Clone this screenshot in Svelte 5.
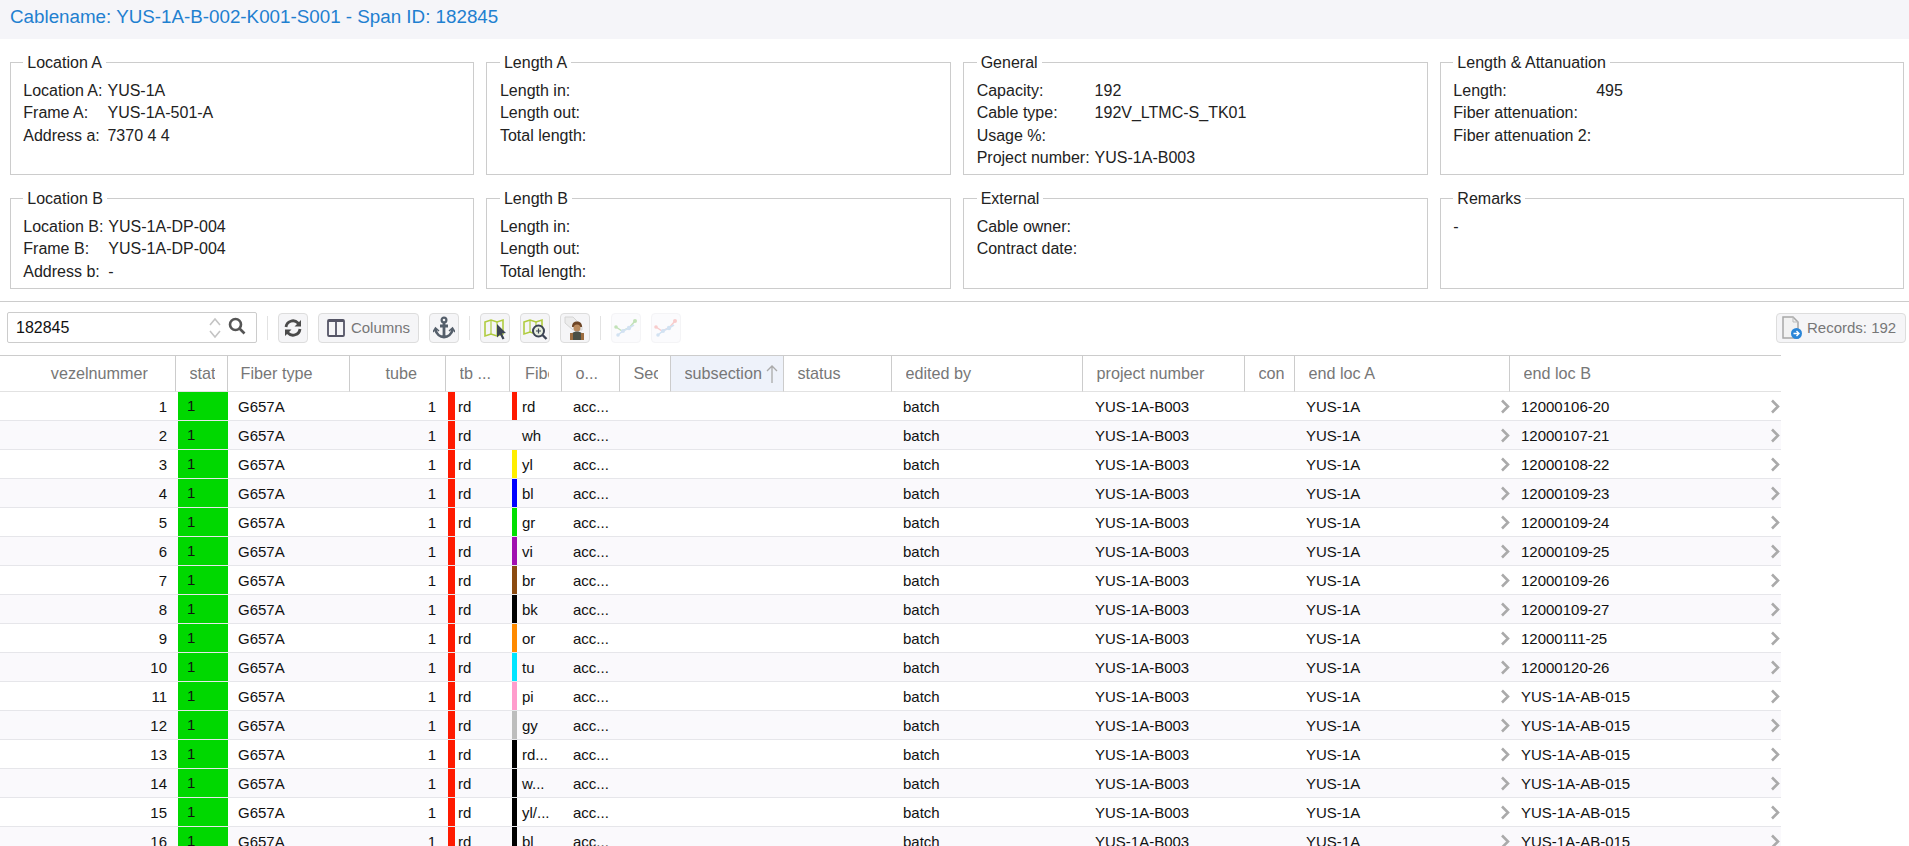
<script>
  const topBoxes = [
    { title: "Location A", rows: [["Location A:", "YUS-1A"], ["Frame A:", "YUS-1A-501-A"], ["Address a:", "7370 4 4"]] },
    { title: "Length A", rows: [["Length in:", ""], ["Length out:", ""], ["Total length:", ""]] },
    { title: "General", rows: [["Capacity:", "192"], ["Cable type:", "192V_LTMC-S_TK01"], ["Usage %:", ""], ["Project number:", "YUS-1A-B003"]] },
    { title: "Length & Attanuation", rows: [["Length:", "495"], ["Fiber attenuation:", ""], ["Fiber attenuation 2:", ""]] },
    { title: "Location B", rows: [["Location B:", "YUS-1A-DP-004"], ["Frame B:", "YUS-1A-DP-004"], ["Address b:", "-"]] },
    { title: "Length B", rows: [["Length in:", ""], ["Length out:", ""], ["Total length:", ""]] },
    { title: "External", rows: [["Cable owner:", ""], ["Contract date:", ""]] },
    { title: "Remarks", rows: [["-", ""]] }
  ];

  const columns = [
    { label: "vezelnummer", width: 176, cls: "right first" },
    { label: "status", width: 52 },
    { label: "Fiber type", width: 122, cls: "ftype" },
    { label: "tube", width: 96, cls: "right wide" },
    { label: "tb ...", width: 64 },
    { label: "Fiber color", width: 52, cls: "fc" },
    { label: "o...", width: 58 },
    { label: "Section", width: 51 },
    { label: "subsection", width: 113, cls: "sorted" },
    { label: "status", width: 108 },
    { label: "edited by", width: 191 },
    { label: "project number", width: 162 },
    { label: "contract", width: 50, cls: "con" },
    { label: "end loc A", width: 215 },
    { label: "end loc B", width: 271 }
  ];

  const fibers = [
    ["rd", "#ff1a00"], ["wh", "transparent"], ["yl", "#ffee00"], ["bl", "#0000ff"],
    ["gr", "#00e000"], ["vi", "#a010b0"], ["br", "#8b4a10"], ["bk", "#000"],
    ["or", "#ff8a00"], ["tu", "#00e5ff"], ["pi", "#ff9ccc"], ["gy", "#bdbdbd"],
    ["rd...", "#000"], ["w...", "#000"], ["yl/...", "#000"], ["bl", "#000"]
  ];

  const endB = ["12000106-20", "12000107-21", "12000108-22", "12000109-23", "12000109-24",
    "12000109-25", "12000109-26", "12000109-27", "12000111-25", "12000120-26"];

  const rows = fibers.map((f, i) => ({
    nr: i + 1,
    fiber: f[0],
    color: f[1],
    locB: endB[i] || "YUS-1A-AB-015"
  }));
</script>

<header class="title">Cablename: YUS-1A-B-002-K001-S001 - Span ID: 182845</header>

<section class="boxes">
  {#each topBoxes as box}
    <fieldset>
      <legend>{box.title}</legend>
      <div class="pairs">
        {#each box.rows as r}
          <span>{r[0]}</span><span>{r[1]}</span>
        {/each}
      </div>
    </fieldset>
  {/each}
</section>

<div class="toolbar">
  <div class="search">
    <span class="search-val">182845</span>
    <svg class="spin" width="14" height="24" viewBox="0 0 14 24" fill="none" stroke="#c4c4c4" stroke-width="1.6">
      <path d="M2 9l5-6 5 6M2 15l5 6 5-6" />
    </svg>
    <svg class="mag" width="18" height="18" viewBox="0 0 18 18" fill="none" stroke="#555" stroke-width="2.6">
      <circle cx="7.5" cy="7.5" r="5.5" />
      <path d="M11.5 11.5l5 5" />
    </svg>
  </div>
  <i class="sep"></i>
  <button aria-label="refresh">
    <svg width="20" height="20" viewBox="0 0 20 20" fill="none" stroke="#4a4a4a" stroke-width="2.8">
      <path d="M3 9a7 7 0 0 1 12-4l1.5 2" />
      <path d="M17 11a7 7 0 0 1-12 4l-1.5-2" />
      <path d="M18 2v6.5h-6.5M2 18v-6.5h6.500" fill="#4a4a4a" stroke="none" />
    </svg>
  </button>
  <button class="cols">
    <svg width="18" height="20" viewBox="0 0 18 20" fill="none" stroke="#556" stroke-width="1.8">
      <rect x="1" y="2" width="16" height="16" rx="1" />
      <path d="M9 2v16M1 3h16" />
    </svg>
    Columns
  </button>
  <button aria-label="anchor">
    <svg width="22" height="24" viewBox="0 0 22 24" fill="none" stroke="#555f6b" stroke-width="2.800">
      <circle cx="11" cy="4" r="2.400" stroke-width="2.200" />
      <path d="M11 7v14M7 10h8M2.500 14c1 4 4.500 7 8.500 7s7.500-3 8.500-7" />
      <path d="M0 16l2.500-4 3.500 3M22 16l-2.500-4-3.500 3" stroke-width="1.500" />
    </svg>
  </button>
  <i class="sep"></i>
  <button aria-label="map select">
    <svg width="24" height="24" viewBox="0 0 24 24" fill="none">
      <path d="M2 6l6-2 6 2 6-2v14l-6 2-6-2-6 2z" stroke="#b0cc40" stroke-width="1.600" />
      <path d="M8 4v14M14 6v14" stroke="#b0cc40" stroke-width="1.200" />
      <path d="M14 8l9 9-4 .5 2.500 5-2 1-2.500-5-3 3z" fill="#3c4454" />
    </svg>
  </button>
  <button aria-label="map zoom">
    <svg width="26" height="24" viewBox="0 0 26 24" fill="none">
      <path d="M2 6l6-2 6 2 6-2v12l-6 2-6-2-6 2z" stroke="#b0cc40" stroke-width="1.600" />
      <path d="M8 4v12M14 6v6" stroke="#b0cc40" stroke-width="1.200" />
      <circle cx="16.500" cy="15" r="5.500" stroke="#3c4454" stroke-width="2" fill="#e8efe0" />
      <path d="M20.500 19l4 4" stroke="#3c4454" stroke-width="2.400" />
      <path d="M14 15h5M16.500 12.500v5" stroke="#3c4454" stroke-width="1.200" />
    </svg>
  </button>
  <button aria-label="tag user">
    <svg width="24" height="26" viewBox="0 0 24 26" fill="none">
      <path d="M2 2h8l9 9v4H10L2 8z" fill="#ececec" stroke="#d4d4d4" />
      <path d="M9 12c0-4 2-5.500 5-5.500s5 1.500 5 5.500z" fill="#6d4526" />
      <circle cx="14" cy="13" r="3.500" fill="#b98a5e" />
      <path d="M7 25c0-6 3-8.500 7-8.500s7 2.500 7 8.500z" fill="#4a4f45" />
      <path d="M7 18h3v7H7zM18 18h3v7h-3z" fill="#9c6d40" />
    </svg>
  </button>
  <i class="sep"></i>
  <button class="off" aria-label="chart green">
    <svg width="24" height="20" viewBox="0 0 24 20" fill="none" stroke-width="1.500">
      <path d="M2 9l6 4 7-3 6-7" stroke="#c2e2b8" />
      <path d="M4 17l5-4 6-3 5-3" stroke="#d2e2f2" />
      <g fill="#c2e2b8"><circle cx="2" cy="9" r="1.800" /><circle cx="21" cy="3" r="2" /></g>
      <g fill="#d2e2f2"><circle cx="4" cy="17" r="1.800" /><circle cx="9" cy="13" r="2" /><circle cx="15" cy="10" r="2.200" /></g>
    </svg>
  </button>
  <button class="off" aria-label="chart red">
    <svg width="24" height="20" viewBox="0 0 24 20" fill="none" stroke-width="1.500">
      <path d="M2 9l6 4 7-3 6-7" stroke="#f8cccc" />
      <path d="M4 17l5-4 6-3 5-3" stroke="#d2e2f2" />
      <g fill="#f8cccc"><circle cx="2" cy="9" r="1.800" /><circle cx="21" cy="3" r="2" /></g>
      <g fill="#d2e2f2"><circle cx="4" cy="17" r="1.800" /><circle cx="9" cy="13" r="2" /><circle cx="15" cy="10" r="2.200" /></g>
    </svg>
  </button>
  <button class="records">
    <svg width="22" height="26" viewBox="0 0 22 26" fill="none">
      <path d="M2 2h10l5 5v16H2z" fill="#f2f2f2" stroke="#a8a8a8" stroke-width="1.500" />
      <path d="M12 2v5h5" stroke="#bbb" />
      <circle cx="15.500" cy="18.500" r="5.500" fill="#2a86d8" />
      <path d="M12.500 18.500h5M15.500 16l2.500 2.500-2.500 2.500" stroke="#fff" stroke-width="1.400" />
    </svg>
    Records: 192
  </button>
</div>

<table>
  <colgroup>
    {#each columns as c}
      <col style="width:{c.width}px" />
    {/each}
  </colgroup>
  <thead>
    <tr>
      {#each columns as c}
        <th class={c.cls}>
          <span class="clip">{c.label}</span>
          {#if c.cls === "sorted"}
            <svg class="arrow" width="12" height="20" viewBox="0 0 12 20" fill="none" stroke="#aaa" stroke-width="1.300">
              <path d="M6 19V2M1 7l5-5 5 5" />
            </svg>
          {/if}
        </th>
      {/each}
    </tr>
  </thead>
  <tbody>
    {#each rows as r}
      <tr>
        <td class="num">{r.nr}</td>
        <td><div class="state">1</div></td>
        <td class="fibertype">G657A</td>
        <td class="num tube">1</td>
        <td><div class="tag tb"><b style="background:#ff1a00"></b>rd</div></td>
        <td><div class="tag fb"><b style="background:{r.color}"></b>{r.fiber}</div></td>
        <td class="owner">acc...</td>
        <td></td>
        <td></td>
        <td></td>
        <td class="edited">batch</td>
        <td class="project">YUS-1A-B003</td>
        <td></td>
        <td>
          <div class="loc a">YUS-1A
            <svg width="10" height="15" viewBox="0 0 10 15" fill="none" stroke="#aaa" stroke-width="2.600"><path d="M2 1.500l6 6-6 6" /></svg>
          </div>
        </td>
        <td>
          <div class="loc b">{r.locB}
            <svg width="10" height="15" viewBox="0 0 10 15" fill="none" stroke="#aaa" stroke-width="2.600"><path d="M2 1.500l6 6-6 6" /></svg>
          </div>
        </td>
      </tr>
    {/each}
  </tbody>
</table>

<style>
  :global(html), :global(body) {
    height: 846px;
    overflow: hidden;
    background: #fff;
    font-family: "Liberation Sans", Arial, sans-serif;
  }

  .title {
    height: 39px;
    line-height: 34px;
    padding-left: 10px;
    background: #f5f5f9;
    color: #1f80d0;
    font-size: 18.8px;
    box-sizing: border-box;
  }

  .boxes {
    display: grid;
    grid-template-columns: repeat(4, 464.7px);
    grid-template-rows: 123px 101px;
    column-gap: 12px;
    row-gap: 13px;
    padding: 13px 4px 12px 9.7px;
    border-bottom: 1px solid #ccc;
  }

  fieldset {
    margin: 0;
    padding: 0 12.6px;
    min-width: 0;
    border: 1px solid #ccc;
    font-size: 16px;
    color: #222;
  }

  legend {
    margin-left: 0;
    padding: 2px 4px 0;
    font-size: 16px;
    line-height: 18px;
  }

  .pairs {
    display: grid;
    grid-template-columns: auto 1fr;
    column-gap: 5px;
    line-height: 22.500px;
    margin-top: 7.7px;
  }

  .toolbar {
    display: flex;
    align-items: center;
    gap: 10px;
    height: 53px;
    box-sizing: border-box;
    padding: 0 3px 2px 7px;
  }

  .search {
    display: flex;
    align-items: center;
    width: 250px;
    height: 31px;
    box-sizing: border-box;
    border: 1px solid #ccc;
    border-radius: 2px;
    padding: 0 10px 0 8px;
    font-size: 16px;
    color: #111;
  }

  .search-val {
    flex: 1;
  }

  .spin {
    margin-right: 6px;
  }

  .mag {
    margin-top: -4px;
  }

  .sep {
    width: 1px;
    height: 24px;
    background: #e2e2e2;
  }

  button {
    display: flex;
    align-items: center;
    justify-content: center;
    gap: 6px;
    width: 30px;
    height: 30px;
    padding: 0;
    background: #f5f5f7;
    border: 1px solid #ddd;
    border-radius: 4px;
    color: #777;
    font: 15px "Liberation Sans", Arial, sans-serif;
  }

  button.cols {
    width: 101px;
  }

  button.off {
    background: #fbfbfd;
    border-color: #f4f4f6;
  }

  button.records {
    width: 130px;
    margin-left: auto;
    justify-content: flex-start;
    padding-left: 4px;
    gap: 4px;
  }

  table {
    table-layout: fixed;
    width: 1781px;
    border-collapse: separate;
    border-spacing: 0;
    font-size: 15px;
    color: #111;
  }

  th {
    height: 37px;
    box-sizing: border-box;
    padding: 0 12px 0 13.5px;
    border-top: 1px solid #ccc;
    border-bottom: 1px solid #e2e2e2;
    border-right: 1px solid #ccc;
    color: #777;
    font-size: 16.2px;
    font-weight: normal;
    text-align: left;
    white-space: nowrap;
    position: relative;
  }

  th:last-child {
    border-right: 0;
  }

  th.right {
    text-align: right;
  }

  th.wide {
    padding-right: 28px;
  }

  th.first {
    padding-right: 27px;
  }

  th.ftype {
    padding-left: 12.5px;
  }

  th.fc {
    padding-left: 15px;
  }

  th.con {
    padding-right: 10px;
  }

  th.sorted {
    background: #eef2fa;
    padding-right: 0;
  }

  .clip {
    display: block;
    overflow: hidden;
  }

  .arrow {
    position: absolute;
    right: 5px;
    top: 8px;
  }

  td {
    height: 29px;
    box-sizing: border-box;
    padding: 0;
    border-bottom: 1px solid #e6e6ea;
    white-space: nowrap;
    overflow: hidden;
  }

  tbody tr:nth-child(even) td {
    background: #faf9fc;
  }

  td.num {
    text-align: right;
    padding-right: 9px;
  }

  td.tube {
    padding-right: 10px;
  }

  .state {
    height: 28px;
    line-height: 28px;
    margin-left: 2px;
    padding-left: 9px;
    background: #00d800;
  }

  .fibertype {
    padding-left: 10px;
  }

  .tag {
    display: flex;
    align-items: center;
    height: 28px;
    margin-left: 2px;
  }

  .tag b {
    align-self: stretch;
  }

  .tb b {
    width: 7px;
    margin-right: 3px;
  }

  .fb b {
    width: 5px;
    margin-right: 5px;
  }

  .owner {
    padding-left: 11px;
  }

  .edited {
    padding-left: 11px;
  }

  .project {
    padding-left: 12px;
  }

  .loc {
    display: flex;
    align-items: center;
    justify-content: space-between;
    height: 28px;
  }

  .loc.a {
    padding-left: 11px;
  }

  .loc.b {
    padding-left: 11px;
    padding-right: 1px;
  }
</style>
